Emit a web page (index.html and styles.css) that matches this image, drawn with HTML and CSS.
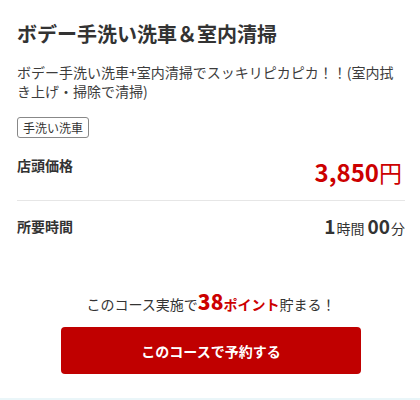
FILE: index.html
```html
<!DOCTYPE html>
<html lang="ja">
<head>
  <meta charset="UTF-8" />
  <title>コース詳細</title>
  <link rel="stylesheet" href="styles.css">
</head>
<body>
  <div class="course">
    <h2 class="course-title">ボデー手洗い洗車＆室内清掃</h2>
    <p class="course-desc">ボデー手洗い洗車+室内清掃でスッキリピカピカ！！(室内拭き上げ・掃除で清掃)</p>
    <span class="tag">手洗い洗車</span>

    <div class="row row-price">
      <div class="row-label">店頭価格</div>
      <div class="price"><b>3,850</b>円</div>
    </div>

    <div class="row row-time">
      <div class="row-label">所要時間</div>
      <div class="time"><b>1</b>時間 <b>00</b>分</div>
    </div>

    <p class="points">このコース実施で<span class="pt"><b>38</b>ポイント</span>貯まる！</p>
    <button class="reserve">このコースで予約する</button>
  </div>
  <div class="footer-strip"></div>
</body>
</html>
```

FILE: styles.css
```css
body {
  margin: 0;
  font-family: "Noto Sans CJK JP", "Noto Sans", sans-serif;
  color: #333;
  background: #fff;
}
.course {
  padding: 18px 15px 24px 17px;
}
.course-title {
  margin: 0;
  font-size: 20px;
  line-height: 32px;
  font-weight: bold;
  color: #333;
}
.course-desc {
  margin: 13px 0 13px;
  font-size: 14px;
  line-height: 19px;
  color: #3c3c3c;
}
.tag {
  display: inline-block;
  border: 1px solid #888;
  border-radius: 3px;
  padding: 0 5px;
  font-size: 12px;
  line-height: 19px;
  color: #333;
}
.row {
  display: flex;
  justify-content: space-between;
}
.row-label {
  font-size: 14px;
  font-weight: bold;
}
.row-price {
  padding: 17px 0 16px;
  border-bottom: 1px solid #e6e6e6;
  align-items: flex-start;
}
.price {
  margin-top: 5px;
  margin-right: 3px;
  color: #c00;
  font-size: 23px;
  line-height: 24px;
}
.price b {
  font-size: 24px;
}
.row-time {
  padding: 11px 0 14px;
  align-items: center;
}
.time {
  font-size: 14px;
}
.time b {
  font-size: 19px;
  margin-right: 1px;
}
.points {
  margin: 37px 0 12px;
  text-align: center;
  font-size: 14px;
  line-height: 22px;
}
.pt {
  color: #c00;
  font-weight: bold;
}
.pt b {
  font-size: 21px;
}
.reserve {
  display: block;
  width: 300px;
  height: 47px;
  margin: 0 auto 0 44px;
  border: none;
  border-radius: 4px;
  background: #c00000;
  color: #fff;
  font-family: inherit;
  font-size: 14px;
  font-weight: bold;
}
.footer-strip {
  height: 10px;
  background: #eaf6f9;
}
```
